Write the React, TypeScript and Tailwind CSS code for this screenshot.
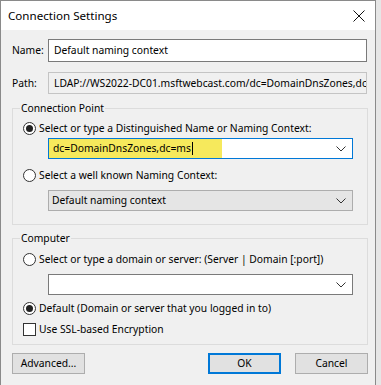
import React from "react";

const Chevron = () => (
  <svg width="10" height="6" viewBox="0 0 10 6" className="shrink-0">
    <path d="M0.5 0.5 L5 5 L9.5 0.5" fill="none" stroke="#333" strokeWidth="1" />
  </svg>
);

const Radio = ({ checked }: { checked?: boolean }) => (
  <span className="w-[13px] h-[13px] rounded-full border border-[#333] bg-white flex items-center justify-center shrink-0">
    {checked && <span className="w-[7px] h-[7px] rounded-full bg-[#222]" />}
  </span>
);

export default function App() {
  return (
    <div
      className="w-[381px] h-[385px] bg-[#e6e6e6] overflow-hidden text-black"
      style={{ fontFamily: '"Noto Sans", "Open Sans", sans-serif' }}
    >
      <div className="w-[376px] h-[385px] bg-[#f0f0f0] border-l border-t border-r border-[#8a8a8a] flex flex-col">
        {/* Title bar */}
        <div className="h-[29px] bg-white flex items-center justify-between pl-[7px] pr-[10px] shrink-0">
          <span className="text-[11.6px] leading-none">Connection Settings</span>
          <svg width="12" height="12" viewBox="0 0 12 12">
            <path d="M0.5 0.5 L11.5 11.5 M11.5 0.5 L0.5 11.5" stroke="#111" strokeWidth="1" />
          </svg>
        </div>

        <div className="flex flex-col pl-[11px] text-[10.3px] leading-none">
          {/* Name */}
          <div className="flex items-center mt-[9px] h-[23px]">
            <span className="w-[36px]">Name:</span>
            <div className="w-[319px] h-[23px] border border-[#7a7a7a] bg-white flex items-center pl-[5px]">
              Default naming context
            </div>
          </div>
          {/* Path */}
          <div className="flex items-center mt-[10px] h-[22px]">
            <span className="w-[36px]">Path:</span>
            <div className="w-[319px] h-[22px] border border-[#c4c4c4] bg-[#f0f0f0] flex items-center pl-[5px] overflow-hidden whitespace-nowrap">
              <span className="shrink-0">LDAP://WS2022-DC01.msftwebcast.com/dc=DomainDnsZones,dc</span>
            </div>
          </div>

          {/* Connection Point group */}
          <div className="relative mt-[14px] w-[356px] h-[117px] border border-[#dcdcdc] flex flex-col">
            <span className="absolute -top-[6px] left-[7px] bg-[#f0f0f0] px-[1px]">Connection Point</span>
            <div className="flex items-center mt-[12px] h-[14px] pl-[10px] gap-[3px]">
              <Radio checked />
              <span>Select or type a Distinguished Name or Naming Context:</span>
            </div>
            <div className="ml-[35px] mt-[3px] w-[305px] h-[21px] border border-[#0078d7] bg-white flex items-center justify-between pr-[6px]">
              <span className="h-full w-[173px] shrink-0 flex items-center bg-[#f6e95c] pl-[4px] whitespace-nowrap">
                dc=DomainDnsZones,dc=ms
                <span className="inline-block w-[1px] h-[13px] bg-black ml-[1px]" />
              </span>
              <Chevron />
            </div>
            <div className="flex items-center mt-[9px] h-[14px] pl-[10px] gap-[3px]">
              <Radio />
              <span>Select a well known Naming Context:</span>
            </div>
            <div className="ml-[35px] mt-[8px] w-[305px] h-[21px] border border-[#adadad] bg-[#e5e5e5] flex items-center justify-between pl-[3px] pr-[6px]">
              <span>Default naming context</span>
              <Chevron />
            </div>
          </div>

          {/* Computer group */}
          <div className="relative mt-[13px] w-[356px] h-[107px] border border-[#dcdcdc] flex flex-col">
            <span className="absolute -top-[6px] left-[7px] bg-[#f0f0f0] px-[1px]">Computer</span>
            <div className="flex items-center mt-[13px] h-[14px] pl-[10px] gap-[3px]">
              <Radio />
              <span>Select or type a domain or server: (Server | Domain [:port])</span>
            </div>
            <div className="ml-[35px] mt-[8px] w-[305px] h-[21px] border border-[#7a7a7a] bg-white flex items-center justify-end pr-[6px]">
              <Chevron />
            </div>
            <div className="flex items-center mt-[6px] h-[14px] pl-[10px] gap-[3px]">
              <Radio checked />
              <span>Default (Domain or server that you logged in to)</span>
            </div>
            <div className="flex items-center mt-[7px] h-[14px] pl-[10px] gap-[3px]">
              <span className="w-[13px] h-[13px] border border-[#333] bg-white shrink-0" />
              <span>Use SSL-based Encryption</span>
            </div>
          </div>

          {/* Buttons */}
          <div className="flex mt-[8px] w-[356px]">
            <div className="w-[73px] h-[21px] bg-[#e1e1e1] border border-[#adadad] flex items-center justify-center">
              Advanced...
            </div>
            <div className="ml-auto w-[73px] h-[21px] bg-[#e1e1e1] border-2 border-[#0078d7] flex items-center justify-center">
              OK
            </div>
            <div className="ml-[14px] w-[73px] h-[21px] bg-[#e1e1e1] border border-[#adadad] flex items-center justify-center">
              Cancel
            </div>
          </div>
        </div>
      </div>
    </div>
  );
}
